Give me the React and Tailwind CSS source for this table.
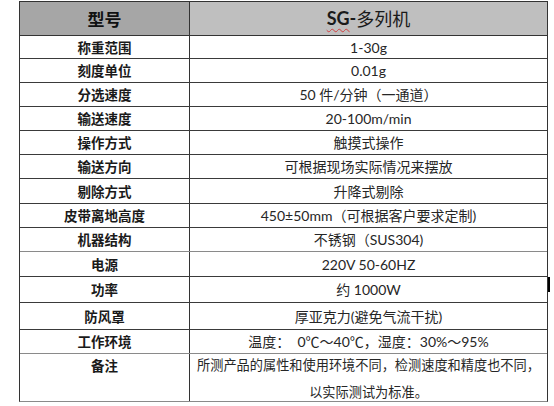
import React from "react";

const rows = [
  { k: "称重范围", v: "1-30g", h: "h-[23px]" },
  { k: "刻度单位", v: "0.01g", h: "h-[24px]" },
  { k: "分选速度", v: "50 件/分钟（一通道）", h: "h-[24px]" },
  { k: "输送速度", v: "20-100m/min", h: "h-[24px]" },
  { k: "操作方式", v: "触摸式操作", h: "h-[24px]" },
  { k: "输送方向", v: "可根据现场实际情况来摆放", h: "h-[24px]" },
  { k: "剔除方式", v: "升降式剔除", h: "h-[25px]" },
  { k: "皮带离地高度", v: "450±50mm（可根据客户要求定制)", h: "h-[24px]" },
  { k: "机器结构", v: "不锈钢（SUS304)", h: "h-[24px]", gray: true },
  { k: "电源", v: "220V 50-60HZ", h: "h-[25px]" },
  { k: "功率", v: "约 1000W", h: "h-[26px]" },
  { k: "防风罩", v: "厚亚克力(避免气流干扰)", h: "h-[27px]" },
  { k: "工作环境", v: "温度：  0℃～40℃，湿度：30%～95%", h: "h-[24px]", gray: true },
];

const font = "font-['Lato','Noto_Sans_CJK_SC',sans-serif]";

export default function App() {
  return (
    <div className="w-[554px] h-[406px] bg-white relative pt-[1px] pl-[19px]">
      <div className={`w-[529px] border-[1.5px] border-[#333] border-b-[#8a8a8a] ${font}`}>
        <div className="flex h-[34px] border-b-[1.5px] border-[#333]">
          <div className="w-[170px] shrink-0 bg-[#a6a6a6] border-r-[1.5px] border-[#333] flex items-center justify-center text-[17px] font-bold text-[#111] font-['Noto_Sans_CJK_SC',sans-serif]">
            型号
          </div>
          <div className="flex-1 bg-[#bfbfbf] flex items-center justify-center text-[18px] text-[#1a1a1a]">
            <span className="font-bold underline decoration-wavy decoration-[#d04040] decoration-1 underline-offset-[3px]">SG</span>
            <span className="font-bold">-</span>
            <span className="font-['Noto_Sans_CJK_SC',sans-serif]">多列机</span>
          </div>
        </div>
        {rows.map((r, i) => (
          <div
            key={i}
            className={`flex ${r.h} border-b-[1.5px] ${r.gray ? "border-[#8a8a8a]" : "border-[#3a3a3a]"}`}
          >
            <div className="w-[170px] shrink-0 border-r-[1.5px] border-[#333] flex items-center justify-center text-[13.5px] font-bold text-[#1a1a1a] font-['Noto_Sans_CJK_SC',sans-serif]">
              {r.k}
            </div>
            <div className="flex-1 flex items-center justify-center text-[14px] text-[#262626] whitespace-pre">
              {r.v}
            </div>
          </div>
        ))}
        <div className="flex h-[47px]">
          <div className="w-[170px] shrink-0 border-r-[1.5px] border-[#333] flex justify-center text-[13.5px] leading-[22px] font-bold text-[#1a1a1a] font-['Noto_Sans_CJK_SC',sans-serif]">
            备注
          </div>
          <div className="flex-1 flex flex-col items-center text-[13.2px] leading-[22px] text-[#262626] font-['Noto_Sans_CJK_SC',sans-serif] whitespace-nowrap">
            <div>所测产品的属性和使用环境不同，检测速度和精度也不同，</div>
            <div className="mt-[5px]">以实际测试为标准。</div>
          </div>
        </div>
      </div>
      <div className="absolute left-[548px] top-[277px] w-[2px] h-[15px] bg-black" />
    </div>
  );
}
